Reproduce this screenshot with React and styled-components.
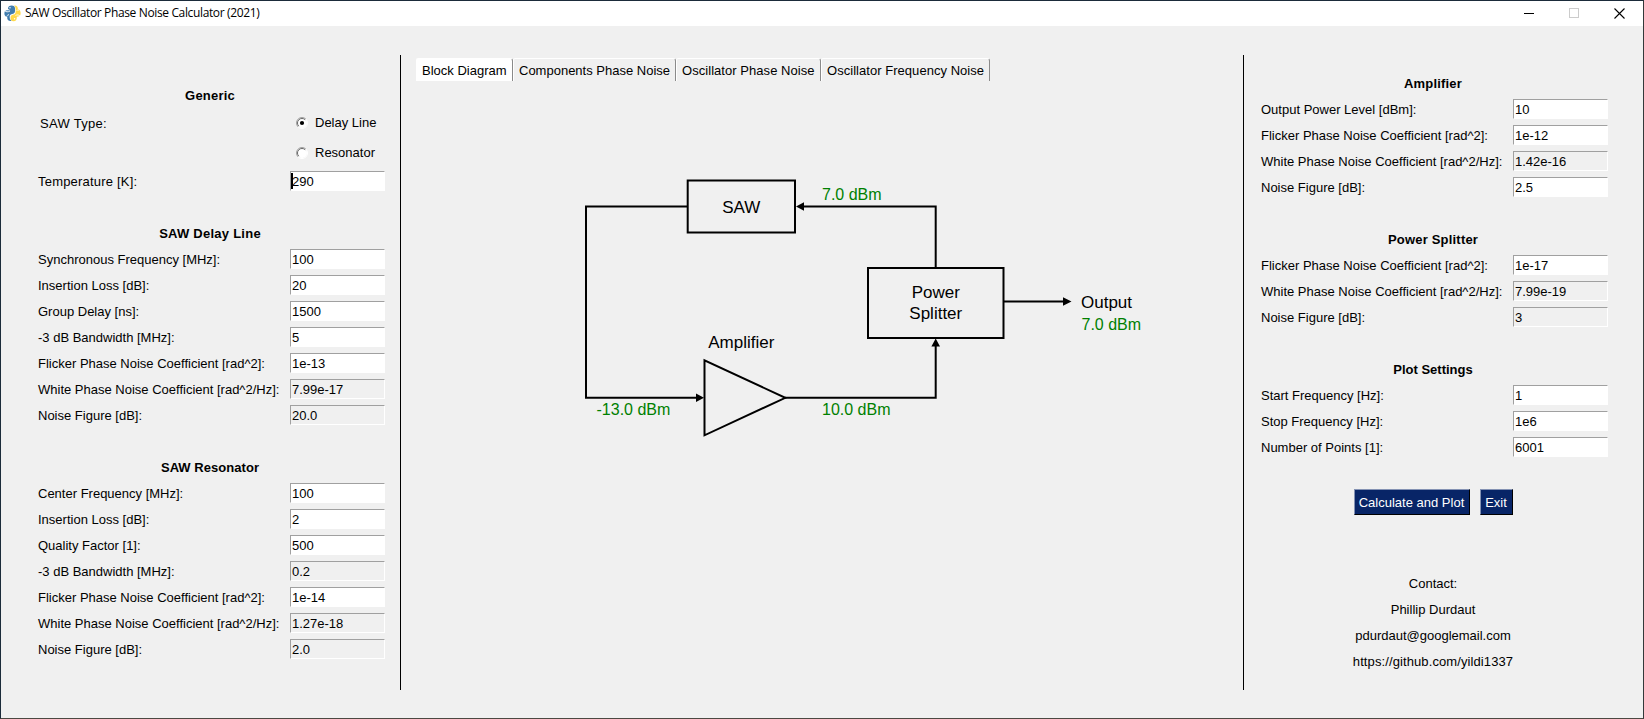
import React from "react";
import styled, { createGlobalStyle, css } from "styled-components";

const Global = createGlobalStyle`
  * { box-sizing: border-box; }
  body { margin: 0; background: #f0f0f0; }
`;

const Window = styled.div`
  width: 1644px;
  height: 719px;
  display: flex;
  flex-direction: column;
  background: #f0f0f0;
  border: 1px solid;
  border-color: #1b2b3a #33393a #4c4842 #1b2b3a;
  font-family: "Liberation Sans", Arial, sans-serif;
  font-size: 13px;
  color: #000;
  overflow: hidden;
`;

const TitleBar = styled.header`
  height: 25px;
  flex: none;
  display: flex;
  align-items: center;
  background: #fff;
  padding-left: 3px;
`;

const Title = styled.span`
  flex: 1;
  margin-left: 4px;
  font-family: "Open Sans", "Noto Sans", sans-serif;
  font-size: 12px;
  letter-spacing: ${(p) => p.$spacing}px;
  line-height: 22px;
  height: 24px;
`;

const WindowControls = styled.div`
  display: flex;
  align-items: center;
  gap: 35px;
  padding: 0 18px 1px 0;
`;

const Body = styled.main`
  flex: 1;
  display: flex;
  align-items: stretch;
  padding: 29px 35px 28px 34px;
`;

const SidePanel = styled.section`
  width: 350px;
  flex: none;
  padding-top: ${(p) => p.$top}px;
`;

const Divider = styled.div`
  width: 1px;
  flex: none;
  background: #000;
  margin: ${(p) => p.$margin};
`;

const Center = styled.section`
  flex: 1;
  min-width: 0;
  padding: 3px 0 0 15px;
`;

const Group = styled.div`
  margin-bottom: 26px;
`;

const Heading = styled.h2`
  margin: 0;
  height: 26px;
  line-height: 27px;
  font-size: 13px;
  font-weight: bold;
  text-align: center;
  letter-spacing: ${(p) => p.$spacing || 0}px;
`;

const Row = styled.div`
  height: 26px;
  display: flex;
  align-items: center;
  justify-content: space-between;
`;

const Label = styled.label`
  padding-left: ${(p) => p.$indent || 3}px;
  line-height: 28px;
  height: 26px;
  white-space: nowrap;
  letter-spacing: ${(p) => p.$spacing || 0}px;
`;

const Field = styled.div`
  position: relative;
  width: 95px;
  height: 20px;
  padding-left: 1px;
  line-height: 20px;
  border: 1px solid;
  border-color: #a0a0a0 #fff #fff #a0a0a0;
  background: ${(p) => (p.$readOnly ? "#f0f0f0" : "#fff")};
  ${(p) =>
    p.$focused &&
    css`
      &::before {
        content: "";
        position: absolute;
        left: 0;
        top: 1px;
        width: 2px;
        height: 16px;
        background: #000;
      }
    `}
`;

const RadioRow = styled.div`
  height: 30px;
  display: flex;
  justify-content: space-between;
  align-items: center;
`;

const RadioOption = styled.div`
  width: 89px;
  height: 30px;
  display: flex;
  align-items: center;
  gap: 7px;
  line-height: 32px;
  white-space: nowrap;
`;

const TabBar = styled.nav`
  display: flex;
  height: 23px;
`;

const Tab = styled.div`
  width: ${(p) => p.$width}px;
  height: 23px;
  flex: none;
  padding-left: 5px;
  line-height: 24px;
  white-space: nowrap;
  letter-spacing: ${(p) => p.$spacing || 0}px;
  border: 1px solid;
  border-width: 1px 1px 0 1px;
  border-color: #fff #8a8a8a transparent #fff;
  border-radius: 2px 3px 0 0;
  background: ${(p) => (p.$active ? "#fff" : "#f0f0f0")};
`;

const Diagram = styled.svg`
  display: block;
  font-family: "Liberation Sans", Arial, sans-serif;
  font-size: 17px;
`;

const Buttons = styled.div`
  display: flex;
  justify-content: center;
  gap: 10px;
  margin-top: 29px;
`;

const Button = styled.div`
  width: ${(p) => p.$width}px;
  height: 26px;
  line-height: 25px;
  text-align: center;
  color: #fff;
  background: #082567;
  border: 1px solid;
  border-color: #8492b3 #000 #000 #8492b3;
  white-space: nowrap;
`;

const Contact = styled.div`
  margin-top: 55px;
  text-align: center;
`;

const ContactLine = styled.div`
  height: 26px;
  line-height: 28px;
  letter-spacing: ${(p) => p.$spacing || 0}px;
`;

const Logo = () => (
  <svg width="17" height="17" viewBox="0 0 17 17">
    <path
      d="M4 4C3.8 1.3 5.500 .4 7.500 .4C10 .4 11 1.500 11 3.500V6C11 8 10 8.600 8 9C6.200 9.400 5.700 10.200 5.700 12.300C5.700 14 6.500 15.200 7.700 16C4.500 16.400 3 15 3.200 12C1 11.500 .3 10 .4 8C.5 5.500 2 5.200 4.500 5.200H6.500"
      fill="#3f7cae"
    />
    <path
      d="M10 .6C12.500 .2 14 1.600 13.900 4.300C16 4.700 16.800 6.500 16.600 8.800C16.400 11 15 11.800 12.800 11.800C13 14.500 12 16.300 9.500 16.300C7.500 16.300 6.500 15 6.500 13C6.500 10.800 7.500 10 9.500 9.600C11.300 9.200 11.700 8 11.700 5.500C11.700 3 11.200 1.500 10 .6Z"
      fill="#ffd94a"
    />
    <path d="M.8 5.800C2 7 4 7.200 6 6M2.500 11.300C4 11 4.200 10 4.500 9" fill="none" stroke="#fff" strokeWidth=".9" />
    <path d="M11.500 10.500C13 9.500 15 9.800 16 11M12.500 5.500C13.300 5 14.300 5 15 5.500" fill="none" stroke="#fff" strokeWidth=".8" />
    <circle cx="6" cy="2.800" r=".7" fill="#fff" />
    <circle cx="10.600" cy="13.800" r=".7" fill="#fff" />
  </svg>
);

const Radio = ({ checked }) => (
  <svg width="12" height="12" viewBox="0 0 12 12">
    <circle cx="6" cy="6" r="5" fill="#fff" />
    <path d="M2.100 9.900A5.500 5.500 0 0 1 9.900 2.100" fill="none" stroke="#a0a0a0" />
    <path d="M2.800 9.200A4.500 4.500 0 0 1 9.200 2.800" fill="none" stroke="#696969" />
    <path d="M9.900 2.100A5.500 5.500 0 0 1 2.100 9.900" fill="none" stroke="#fff" />
    {checked && <circle cx="6" cy="6" r="2.100" fill="#000" />}
  </svg>
);

const delayLine = [
  ["Synchronous Frequency [MHz]:", "100"],
  ["Insertion Loss [dB]:", "20"],
  ["Group Delay [ns]:", "1500"],
  ["-3 dB Bandwidth [MHz]:", "5"],
  ["Flicker Phase Noise Coefficient [rad^2]:", "1e-13"],
  ["White Phase Noise Coefficient [rad^2/Hz]:", "7.99e-17", true],
  ["Noise Figure [dB]:", "20.0", true],
];

const resonator = [
  ["Center Frequency [MHz]:", "100"],
  ["Insertion Loss [dB]:", "2"],
  ["Quality Factor [1]:", "500"],
  ["-3 dB Bandwidth [MHz]:", "0.2", true],
  ["Flicker Phase Noise Coefficient [rad^2]:", "1e-14"],
  ["White Phase Noise Coefficient [rad^2/Hz]:", "1.27e-18", true],
  ["Noise Figure [dB]:", "2.0", true],
];

const amplifier = [
  ["Output Power Level [dBm]:", "10"],
  ["Flicker Phase Noise Coefficient [rad^2]:", "1e-12"],
  ["White Phase Noise Coefficient [rad^2/Hz]:", "1.42e-16", true],
  ["Noise Figure [dB]:", "2.5"],
];

const splitter = [
  ["Flicker Phase Noise Coefficient [rad^2]:", "1e-17"],
  ["White Phase Noise Coefficient [rad^2/Hz]:", "7.99e-19", true],
  ["Noise Figure [dB]:", "3", true],
];

const plot = [
  ["Start Frequency [Hz]:", "1"],
  ["Stop Frequency [Hz]:", "1e6"],
  ["Number of Points [1]:", "6001"],
];

const FieldGroup = ({ title, rows, spacing }) => (
  <Group>
    <Heading $spacing={spacing}>{title}</Heading>
    {rows.map(([label, value, readOnly]) => (
      <Row key={label}>
        <Label>{label}</Label>
        <Field $readOnly={readOnly}>{value}</Field>
      </Row>
    ))}
  </Group>
);

const BlockDiagram = () => (
  <Diagram width="827" height="560" viewBox="416 81 827 560">
    <g fill="none" stroke="#000" strokeWidth="2">
      <rect x="687.700" y="180.500" width="107.300" height="52" />
      <rect x="868" y="268" width="135.500" height="70" />
      <path d="M688 206.500H586V397.800H698" />
      <path d="M704.500 360.300V435.300L785.300 397.800Z" />
      <path d="M785 397.800H935.700V345" />
      <path d="M935.700 268V206.500H802" />
      <path d="M1003 301.500H1065" />
    </g>
    <path d="M704 397.800l-8-4.300v8.600zM796 206.500l8-4.300v8.600zM935.700 338.500l-4.300 8h8.600zM1071.500 301.500l-8.500-4.300v8.600z" />
    <g textAnchor="middle">
      <text x="741.300" y="212.600">SAW</text>
      <text x="741.300" y="348.300">Amplifier</text>
      <text x="935.800" y="298.300">Power</text>
      <text x="935.800" y="319.300">Splitter</text>
    </g>
    <text x="1081" y="307.700">Output</text>
    <g fill="#008000" fontSize="16">
      <text x="822" y="200">7.0 dBm</text>
      <text x="596.500" y="415">-13.0 dBm</text>
      <text x="822" y="415">10.0 dBm</text>
      <text x="1081.500" y="330">7.0 dBm</text>
    </g>
  </Diagram>
);

export default function App() {
  return (
    <Window>
      <Global />
      <TitleBar>
        <Logo />
        <Title $spacing={-0.36}>SAW Oscillator Phase Noise Calculator (2021)</Title>
        <WindowControls>
          <svg width="10" height="10" viewBox="0 0 10 10">
            <path d="M0 5.500H10" stroke="#000" />
          </svg>
          <svg width="10" height="10" viewBox="0 0 10 10">
            <rect x=".5" y=".5" width="9" height="9" fill="none" stroke="#ccc" />
          </svg>
          <svg width="11" height="11" viewBox="0 0 11 11">
            <path d="M.5 .5L10.500 10.500M10.500 .5L.5 10.500" stroke="#000" strokeWidth="1.100" />
          </svg>
        </WindowControls>
      </TitleBar>
      <Body>
        <SidePanel $top={27}>
          <Group>
            <Heading $spacing={0.2}>Generic</Heading>
            <RadioRow>
              <Label $indent={5} $spacing={0.3}>SAW Type:</Label>
              <RadioOption>
                <Radio checked />
                Delay Line
              </RadioOption>
            </RadioRow>
            <RadioRow>
              <span />
              <RadioOption>
                <Radio />
                Resonator
              </RadioOption>
            </RadioRow>
            <Row>
              <Label $spacing={0.2}>Temperature [K]:</Label>
              <Field $focused>290</Field>
            </Row>
          </Group>
          <FieldGroup title="SAW Delay Line" rows={delayLine} spacing={0.25} />
          <FieldGroup title="SAW Resonator" rows={resonator} spacing={0.05} />
        </SidePanel>
        <Divider $margin="0 0 0 15px" />
        <Center>
          <TabBar>
            <Tab $active $width={97}>Block Diagram</Tab>
            <Tab $width={163}>Components Phase Noise</Tab>
            <Tab $width={145} $spacing={0.05}>Oscillator Phase Noise</Tab>
            <Tab $width={169} $spacing={0.04}>Oscillator Frequency Noise</Tab>
          </TabBar>
          <BlockDiagram />
        </Center>
        <Divider $margin="0 14px 0 0" />
        <SidePanel $top={15}>
          <FieldGroup title="Amplifier" rows={amplifier} spacing={0.2} />
          <FieldGroup title="Power Splitter" rows={splitter} spacing={0.2} />
          <FieldGroup title="Plot Settings" rows={plot} />
          <Buttons>
            <Button $width={116}>Calculate and Plot</Button>
            <Button $width={33}>Exit</Button>
          </Buttons>
          <Contact>
            <ContactLine>Contact:</ContactLine>
            <ContactLine>Phillip Durdaut</ContactLine>
            <ContactLine>pdurdaut@googlemail.com</ContactLine>
            <ContactLine $spacing={0.1}>https://github.com/yildi1337</ContactLine>
          </Contact>
        </SidePanel>
      </Body>
    </Window>
  );
}
